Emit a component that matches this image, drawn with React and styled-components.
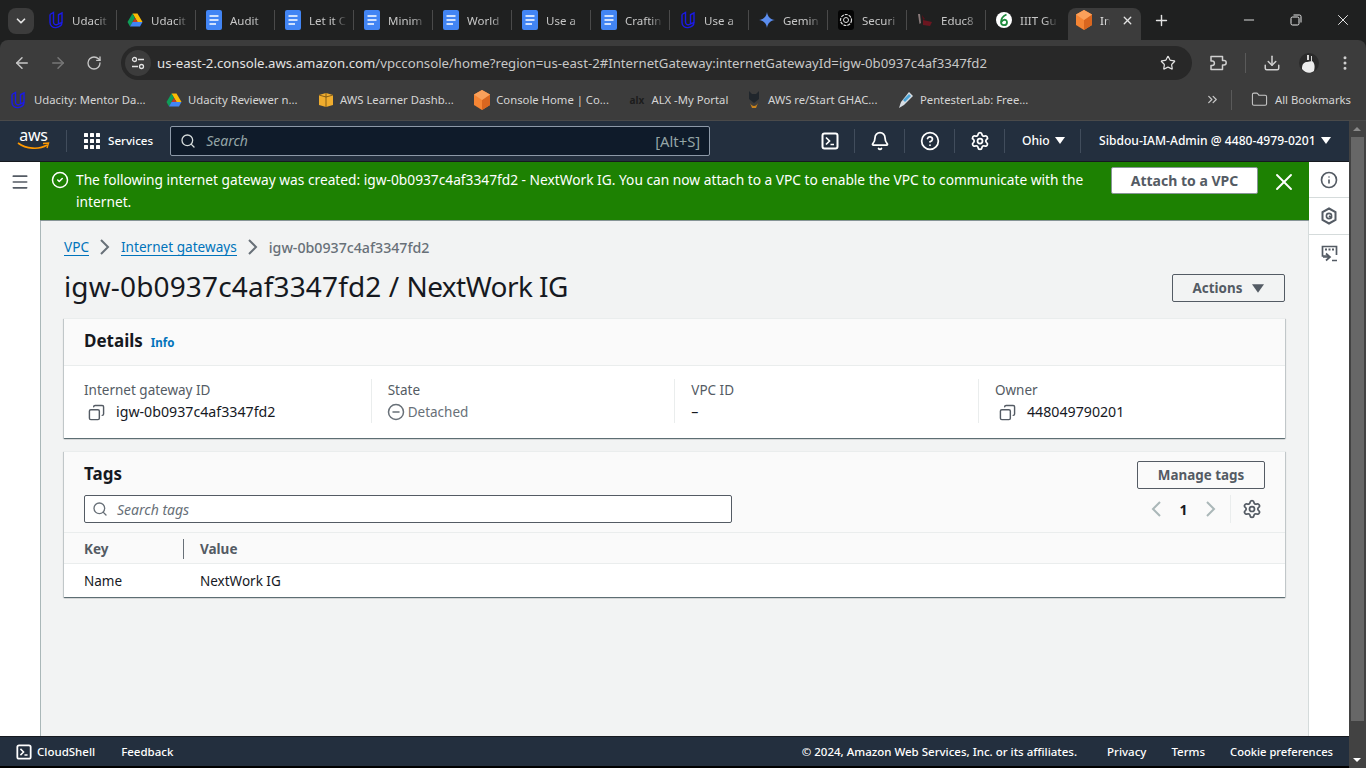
import styled, { createGlobalStyle } from "styled-components";
import {
  ArrowLeft,
  ArrowRight,
  RotateCw,
  Star,
  Download,
  EllipsisVertical,
  ChevronsRight,
  Folder,
  Minus,
  X,
  Plus,
  ChevronDown,
  Bell,
  CircleHelp,
  Settings,
  Search,
  Menu,
  Copy,
  CircleCheck,
  CircleMinus,
  Info,
} from "lucide-react";

const GlobalStyle = createGlobalStyle`
  html, body {
    margin: 0;
    height: 768px;
    overflow: hidden;
    background: #1f2020;
    font-family: "Noto Sans", "Open Sans", sans-serif;
  }
  * { box-sizing: border-box; }
`;

// favicons
const UdacityIcon = ({ size = 16 }) => (
  <svg width={size} height={size + 2} viewBox="0 0 16 18" fill="none" stroke="#1a1ae6" strokeWidth="1.4">
    <path d="M2 3.5 L5.5 1.5 V11 C5.5 13 7 14 9 13.6 L14 11.5 V2 L10.5 3.8 V13 M2 3.5 V11.5 C2 15 5 17 8 16.6 C11 16 14 14 14 11.5" />
  </svg>
);
const DriveIcon = ({ size = 16 }) => (
  <svg width={size} height={size} viewBox="0 0 16 16">
    <path d="M5.5 1.5 H10.5 L15.5 10 H10.5 Z" fill="#fbbc04" />
    <path d="M5.5 1.5 L8 6 L3 14.5 L.5 10 Z" fill="#0f9d58" />
    <path d="M5.5 10 H15.5 L13 14.5 H3 Z" fill="#4285f4" />
    <path d="M5.5 10 H10.5 L8 6 Z" fill="#c53929" />
  </svg>
);
const DocsIcon = () => (
  <svg width="16" height="20" viewBox="0 0 16 20">
    <rect x="0" y="0" width="16" height="20" rx="2" fill="#4285f4" />
    <path d="M3.5 6 H12.5 M3.5 10 H12.5 M3.5 14 H10" stroke="#fff" strokeWidth="1.7" />
  </svg>
);
const CubeIcon = () => (
  <svg width="16" height="20" viewBox="0 0 16 20">
    <path d="M8 0 L16 4.5 V15 L8 20 L0 15 V4.5 Z" fill="#f58534" />
    <path d="M8 10 L16 4.5 V15 L8 20 Z" fill="#d9661f" />
    <path d="M8 0 L16 4.5 L8 10 L0 4.5 Z" fill="#faa05a" />
  </svg>
);
const GeminiIcon = () => (
  <svg width="16" height="16" viewBox="0 0 16 16">
    <path d="M8 0 C8.6 4.6 11.4 7.4 16 8 C11.4 8.6 8.6 11.4 8 16 C7.4 11.4 4.6 8.6 0 8 C4.6 7.4 7.4 4.6 8 0 Z" fill="#5b8def" />
  </svg>
);
const OpenAiIcon = () => (
  <svg width="16" height="20" viewBox="0 0 16 20">
    <rect width="16" height="20" rx="3" fill="#050505" />
    <circle cx="8" cy="10" r="5.5" fill="none" stroke="#ddd" strokeWidth="1.2" strokeDasharray="3 1" />
    <circle cx="8" cy="10" r="2.5" fill="none" stroke="#ddd" strokeWidth="1" />
  </svg>
);
const EducIcon = () => (
  <svg width="16" height="16" viewBox="0 0 16 16">
    <path d="M1 2 L3 2 L4 11 L2.5 12 Z" fill="#8a7a7a" />
    <path d="M6 8 L15 10 L13 14 L6 13 Z" fill="#6b1620" />
    <path d="M5 3 L8 7 L6 8 Z" fill="#571018" />
  </svg>
);
const IiitIcon = () => (
  <svg width="16" height="16" viewBox="0 0 16 16">
    <circle cx="8" cy="8" r="8" fill="#fff" />
    <path d="M10.5 2.5 C7 4 5 7 5 10 C5 12.4 6.6 13.2 8 13.2 C9.8 13.2 11 11.8 11 10.2 C11 8.6 9.6 7.6 8 7.8 C6.8 8 6 9 5.6 10" fill="none" stroke="#1f8a3d" strokeWidth="1.8" />
  </svg>
);
const AwsBoxIcon = () => (
  <svg width="16" height="16" viewBox="0 0 16 16">
    <path d="M1 3 L8 1 L15 3 V13 L8 15 L1 13 Z" fill="#f0ad2e" />
    <path d="M8 1 V15 M1 3 L8 5 L15 3" stroke="#6b4a10" strokeWidth=".8" fill="none" />
  </svg>
);
const AlxIcon = () => <AlxMark>alx</AlxMark>;
const RestartIcon = () => (
  <svg width="16" height="20" viewBox="0 0 16 20">
    <path d="M3 1 L6 4 H10 L13 1 V9 L8 13 L3 9 Z" fill="#20262c" />
    <path d="M4 13 C6 17 10 17 12 13 L10 18 H6 Z" fill="#c9831c" />
  </svg>
);
const PentesterIcon = () => (
  <svg width="16" height="18" viewBox="0 0 16 18">
    <path d="M11 1 L15 5 L6 14 L1 17 L3 11 Z" fill="#d7dde3" />
    <path d="M11 3 L13 5 L7 11 L5 9 Z" fill="#4ca5d8" />
  </svg>
);

// chrome and console glyphs
const ExtensionIcon = () => (
  <svg width="18" height="18" viewBox="0 0 18 18" fill="none" stroke="#d0d0d0" strokeWidth="1.5" strokeLinejoin="round">
    <path d="M2 2.5 H13.5 V6.6 H15 A2.2 2.2 0 0 1 15 11 H13.5 V15.5 H2 V11.4 H3.2 A2.2 2.2 0 0 0 3.2 7 H2 Z" />
  </svg>
);
const ProfilePhoto = () => (
  <svg width="20" height="20" viewBox="0 0 20 20">
    <circle cx="10" cy="10" r="10" fill="#2b2b2b" />
    <path d="M3 16 C3 11 5 9 8 9 L13 8 C16 10 16 14 15 18 C11 21 6 20 3 16 Z" fill="#ececec" />
    <path d="M8 2 H10 V7 H8 Z M12 3 H13 V8 H12 Z" fill="#d8d8d8" />
  </svg>
);
const RestoreIcon = () => (
  <svg width="12" height="12" viewBox="0 0 12 12" fill="none" stroke="#e8e8e8" strokeWidth="1">
    <rect x="1" y="3" width="8" height="8" rx="1.5" />
    <path d="M3.5 1 H9.5 A1.5 1.5 0 0 1 11 2.5 V8.5" />
  </svg>
);
const TerminalIcon = ({ size = 18 }) => (
  <svg width={size} height={size} viewBox="0 0 18 18" fill="none" stroke="#fff" strokeWidth="2">
    <rect x="1.5" y="1.5" width="15" height="15" rx="2" />
    <path d="M5 5.5 L8.5 9 L5 12.5 M9.5 12.5 H13" strokeWidth="1.7" />
  </svg>
);
const GridIcon = () => (
  <svg width="16" height="16" viewBox="0 0 16 16" fill="#fff">
    {[0, 6, 12].flatMap((y) => [0, 6, 12].map((x) => <rect key={`${x}-${y}`} x={x} y={y} width="4" height="4" rx=".5" />))}
  </svg>
);
const Caret = ({ color = "#fff", w = 10, h = 7 }) => (
  <svg width={w} height={h} viewBox="0 0 10 7">
    <path d="M0 0 H10 L5 7 Z" fill={color} />
  </svg>
);
// large thin chevrons of breadcrumbs and pager
const Chevron = ({ left, color }) => (
  <svg width="10" height="16" viewBox="0 0 10 16" fill="none" stroke={color} strokeWidth="2">
    <path d={left ? "M9 1 L2 8 L9 15" : "M1 1 L8 8 L1 15"} />
  </svg>
);
const HexIcon = () => (
  <svg width="16" height="18" viewBox="0 0 16 18" fill="none" stroke="#545b64" strokeWidth="2">
    <path d="M8 1.5 L14.5 5 V13 L8 16.5 L1.5 13 V5 Z" />
    <circle cx="8" cy="9" r="2.6" strokeWidth="1.6" />
    <path d="M8 9 L11 11" strokeWidth="1.6" />
  </svg>
);
const FeedbackIcon = () => (
  <svg width="17" height="17" viewBox="0 0 17 17" fill="none" stroke="#545b64" strokeWidth="1.7">
    <path d="M8 11 H1.5 V1.5 H15.5 V10" />
    <path d="M4 4.5 H6 M7.5 4.5 H9.5 M11 4.5 H13" strokeWidth="1.8" />
    <path d="M5 8.5 L9 12 L5 15.5 M2 12 H8.5 M11 15.5 H16" />
  </svg>
);

// data
const tabs = [
  { icon: <UdacityIcon />, title: "Udacit" },
  { icon: <DriveIcon />, title: "Udacit" },
  { icon: <DocsIcon />, title: "Audit" },
  { icon: <DocsIcon />, title: "Let it C" },
  { icon: <DocsIcon />, title: "Minim" },
  { icon: <DocsIcon />, title: "World" },
  { icon: <DocsIcon />, title: "Use a" },
  { icon: <DocsIcon />, title: "Craftin" },
  { icon: <UdacityIcon />, title: "Use a" },
  { icon: <GeminiIcon />, title: "Gemin" },
  { icon: <OpenAiIcon />, title: "Securi" },
  { icon: <EducIcon />, title: "Educ8" },
  { icon: <IiitIcon />, title: "IIIT Gu" },
];

const bookmarks = [
  { icon: <UdacityIcon />, title: "Udacity: Mentor Da..." },
  { icon: <DriveIcon />, title: "Udacity Reviewer n..." },
  { icon: <AwsBoxIcon />, title: "AWS Learner Dashb..." },
  { icon: <CubeIcon />, title: "Console Home | Co..." },
  { icon: <AlxIcon />, title: "ALX -My Portal" },
  { icon: <RestartIcon />, title: "AWS re/Start GHAC...", tight: true },
  { icon: <PentesterIcon />, title: "PentesterLab: Free..." },
];

const details = [
  { label: "Internet gateway ID", value: "igw-0b0937c4af3347fd2", copy: true },
  { label: "State", value: "Detached", status: true },
  { label: "VPC ID", value: "–" },
  { label: "Owner", value: "448049790201", copy: true },
];

export default function App() {
  return (
    <>
      <GlobalStyle />
      <Page>
        <TabStrip>
          <TabSearch>
            <ChevronDown size={14} strokeWidth={3} color="#e3e3e3" />
          </TabSearch>
          <TabList>
            {tabs.map((tab, i) => (
              <Tab key={i}>
                <FaviconSlot>{tab.icon}</FaviconSlot>
                <TabTitle>{tab.title}</TabTitle>
              </Tab>
            ))}
            <ActiveTab>
              <CubeIcon />
              <ActiveTitle>In</ActiveTitle>
              <X size={13} strokeWidth={2.5} color="#e3e3e3" />
            </ActiveTab>
            <NewTab>
              <Plus size={17} strokeWidth={2} color="#e3e3e3" />
            </NewTab>
          </TabList>
          <WindowButtons>
            <Minus size={16} strokeWidth={1.4} color="#e8e8e8" />
            <RestoreIcon />
            <X size={18} strokeWidth={1.3} color="#e8e8e8" />
          </WindowButtons>
        </TabStrip>

        <Toolbar>
          <ToolbarButton><ArrowLeft size={18} color="#c7c7c7" /></ToolbarButton>
          <ToolbarButton><ArrowRight size={18} color="#777" /></ToolbarButton>
          <ToolbarButton><RotateCw size={16} color="#c7c7c7" /></ToolbarButton>
          <AddressBar>
            <SiteChip>
              <svg width="14" height="14" viewBox="0 0 14 14" fill="none" stroke="#e3e3e3" strokeWidth="1.3">
                <circle cx="3.5" cy="3.5" r="2" />
                <path d="M7 3.5 H13 M1 10.5 H7" />
                <circle cx="10.5" cy="10.5" r="2" />
              </svg>
            </SiteChip>
            <UrlText>
              us-east-2.console.aws.amazon.com<UrlDim>/vpcconsole/home?region=us-east-2#InternetGateway:internetGatewayId=igw-0b0937c4af3347fd2</UrlDim>
            </UrlText>
            <Star size={16} strokeWidth={1.8} color="#e3e3e3" />
          </AddressBar>
          <ToolbarActions>
            <ExtensionIcon />
            <ToolbarDivider />
            <Download size={18} color="#d0d0d0" />
            <ProfilePhoto />
            <EllipsisVertical size={18} color="#d0d0d0" />
          </ToolbarActions>
        </Toolbar>

        <BookmarksBar>
          <BookmarkList>
            {bookmarks.map((b, i) => (
              <Bookmark key={i} $tight={b.tight}>
                {b.icon}
                <span>{b.title}</span>
              </Bookmark>
            ))}
          </BookmarkList>
          <BookmarksRight>
            <OverflowChevrons size={15} color="#c7c7c7" />
            <ToolbarDivider />
            <AllBookmarks>
              <Folder size={17} strokeWidth={1.5} color="#c7c7c7" />
              <span>All Bookmarks</span>
            </AllBookmarks>
          </BookmarksRight>
        </BookmarksBar>

        <ConsoleRow>
          <Console>
            <TopNav>
              <AwsLogo>
                <AwsWord>aws</AwsWord>
                <svg width="33" height="8" viewBox="0 0 33 8" fill="none">
                  <path d="M1 1 C9 7 22 8 30 3" stroke="#ff9900" strokeWidth="1.6" />
                  <path d="M26 1.5 L31.5 1 L30 6" stroke="#ff9900" strokeWidth="1.4" />
                </svg>
              </AwsLogo>
              <NavDivider />
              <ServicesButton>
                <GridIcon />
                <span>Services</span>
              </ServicesButton>
              <GlobalSearch>
                <Search size={16} strokeWidth={2} color="#d5dbdb" />
                <GlobalSearchText>Search</GlobalSearchText>
                <Shortcut>[Alt+S]</Shortcut>
              </GlobalSearch>
              <NavRight>
                <NavIconCell><TerminalIcon /></NavIconCell>
                <NavIconCell><Bell size={20} strokeWidth={2.1} color="#fff" /></NavIconCell>
                <NavIconCell><CircleHelp size={20} strokeWidth={2.1} color="#fff" /></NavIconCell>
                <NavIconCell><Settings size={20} strokeWidth={2.1} color="#fff" /></NavIconCell>
                <NavMenu $width={76} $pad={17}>Ohio <Caret /></NavMenu>
                <NavMenu $width={268} $pad={18} $last>Sibdou-IAM-Admin @ 4480-4979-0201 <Caret /></NavMenu>
              </NavRight>
            </TopNav>

            <Middle>
              <SideRail>
                <Menu size={20} color="#545b64" />
              </SideRail>
              <Content>
                <Flash>
                  <CircleCheck size={18} strokeWidth={2} color="#fff" />
                  <FlashText>
                    The following internet gateway was created: igw-0b0937c4af3347fd2 - NextWork IG. You can now attach to a VPC to enable the VPC to communicate with the internet.
                  </FlashText>
                  <FlashAction>Attach to a VPC</FlashAction>
                  <FlashClose><X size={28} strokeWidth={1.6} color="#fff" /></FlashClose>
                </Flash>

                <Body>
                  <Breadcrumbs>
                    <CrumbLink>VPC</CrumbLink>
                    <Chevron color="#687078" />
                    <CrumbLink>Internet gateways</CrumbLink>
                    <Chevron color="#687078" />
                    <CrumbCurrent>igw-0b0937c4af3347fd2</CrumbCurrent>
                  </Breadcrumbs>

                  <TitleRow>
                    <PageTitle>
                      <TitleId>igw-0b0937c4af3347fd2</TitleId> / <TitleName>NextWork IG</TitleName>
                    </PageTitle>
                    <ActionsButton $width={113}>
                      Actions <Caret color="#545b64" w={12} h={9} />
                    </ActionsButton>
                  </TitleRow>

                  <Card $mb={13}>
                    <DetailsHeader>
                      <CardTitle>Details</CardTitle>
                      <InfoLink>Info</InfoLink>
                    </DetailsHeader>
                    <DetailsGrid>
                      {details.map((d) => (
                        <DetailCell key={d.label}>
                          <DetailLabel>{d.label}</DetailLabel>
                          {d.copy && (
                            <DetailValue $copy>
                              <MirroredCopy size={17} strokeWidth={2} color="#545b64" />
                              {d.value}
                            </DetailValue>
                          )}
                          {d.status && (
                            <StatusValue>
                              <CircleMinus size={18} strokeWidth={2} color="#687078" />
                              {d.value}
                            </StatusValue>
                          )}
                          {!d.copy && !d.status && <DetailValue>{d.value}</DetailValue>}
                        </DetailCell>
                      ))}
                    </DetailsGrid>
                  </Card>

                  <Card>
                    <TagsHeader>
                      <TagsLeft>
                        <CardTitle>Tags</CardTitle>
                        <TagSearch>
                          <Search size={16} strokeWidth={2} color="#687078" />
                          <TagSearchText>Search tags</TagSearchText>
                        </TagSearch>
                      </TagsLeft>
                      <TagsRight>
                        <OutlineButton $width={128}>Manage tags</OutlineButton>
                        <Pager>
                          <Chevron left color="#aab7b8" />
                          <PageNumber>1</PageNumber>
                          <Chevron color="#aab7b8" />
                          <PagerDivider />
                          <Settings size={20} strokeWidth={2.1} color="#545b64" />
                        </Pager>
                      </TagsRight>
                    </TagsHeader>
                    <TagTable>
                      <HeadRow>
                        <KeyHead>Key</KeyHead>
                        <ValueHead>Value</ValueHead>
                      </HeadRow>
                      <DataRow>
                        <KeyCell>Name</KeyCell>
                        <ValueCell>NextWork IG</ValueCell>
                      </DataRow>
                    </TagTable>
                  </Card>
                </Body>
              </Content>
              <HelpRail>
                <HelpCell><Info size={18} strokeWidth={2.2} color="#545b64" /></HelpCell>
                <HelpCell><HexIcon /></HelpCell>
                <HelpCell $plain><FeedbackIcon /></HelpCell>
              </HelpRail>
            </Middle>

            <Footer>
              <FooterLeft>
                <FooterShell><TerminalIcon size={16} /> CloudShell</FooterShell>
                <span>Feedback</span>
              </FooterLeft>
              <FooterRight>
                <Copyright>© 2024, Amazon Web Services, Inc. or its affiliates.</Copyright>
                <span>Privacy</span>
                <span>Terms</span>
                <CookieLink>Cookie preferences</CookieLink>
              </FooterRight>
            </Footer>
            <BottomEdge />
          </Console>
          <Scrollbar>
            <ScrollArrow />
            <ScrollThumb />
            <ScrollArrow $down />
          </Scrollbar>
        </ConsoleRow>
      </Page>
    </>
  );
}

//styles
const Page = styled.div`
  width: 1366px;
  height: 768px;
  display: flex;
  flex-direction: column;
  overflow: hidden;
`;
const TabStrip = styled.div`
  height: 40px;
  flex: none;
  display: flex;
  align-items: flex-start;
  background: #1f2020;
  padding: 8px 0 0 8px;
`;
const TabSearch = styled.div`
  width: 26px;
  height: 26px;
  border-radius: 8px;
  background: #3c3c3c;
  display: flex;
  align-items: center;
  justify-content: center;
`;
const TabList = styled.div`
  display: flex;
  align-items: flex-start;
  height: 32px;
  margin-left: 4px;
`;
const Tab = styled.div`
  width: 79px;
  height: 20px;
  margin-top: 2px;
  flex: none;
  display: flex;
  align-items: center;
  padding-left: 10px;
  gap: 8px;
  border-right: 1px solid #4a4a4a;
  &:nth-child(13) { border-right: none; }
`;
const FaviconSlot = styled.span`
  width: 16px;
  height: 20px;
  display: flex;
  align-items: center;
  justify-content: center;
  flex: none;
`;
const TabTitle = styled.span`
  width: 38px;
  font-size: 11.5px;
  color: #c7c7c7;
  white-space: nowrap;
  overflow: hidden;
  mask-image: linear-gradient(to right, #000 65%, transparent);
`;
const ActiveTab = styled.div`
  width: 73px;
  height: 32px;
  flex: none;
  margin-left: 3px;
  display: flex;
  align-items: center;
  padding: 0 0 8px 8px;
  gap: 8px;
  background: #3c3c3c;
  border-radius: 8px 8px 0 0;
`;
const ActiveTitle = styled.span`
  width: 10px;
  margin-right: 3px;
  font-size: 11.5px;
  color: #e3e3e3;
  white-space: nowrap;
  mask-image: linear-gradient(to right, #000 50%, transparent);
`;
const NewTab = styled.div`
  width: 40px;
  height: 32px;
  flex: none;
  padding-bottom: 8px;
  display: flex;
  align-items: center;
  justify-content: center;
`;
const WindowButtons = styled.div`
  margin-left: auto;
  width: 140px;
  height: 24px;
  flex: none;
  display: grid;
  grid-template-columns: repeat(3, 1fr);
  align-items: center;
  justify-items: center;
`;
const Toolbar = styled.div`
  height: 40px;
  flex: none;
  display: flex;
  align-items: flex-start;
  padding: 6px 8px 0 4px;
  background: #3c3c3c;
  border-radius: 8px 8px 0 0;
`;
const ToolbarButton = styled.div`
  width: 36px;
  height: 34px;
  display: flex;
  align-items: center;
  justify-content: center;
`;
const AddressBar = styled.div`
  width: 1071px;
  height: 34px;
  margin-left: 9px;
  display: flex;
  align-items: center;
  padding: 0 16px 0 4px;
  border-radius: 17px;
  background: #282828;
`;
const SiteChip = styled.div`
  width: 26px;
  height: 26px;
  border-radius: 50%;
  background: #3c3c3c;
  display: flex;
  align-items: center;
  justify-content: center;
  flex: none;
`;
const UrlText = styled.span`
  flex: 1;
  margin-left: 6px;
  font-size: 13.2px;
  color: #e3e3e3;
  white-space: nowrap;
`;
const UrlDim = styled.span`
  color: #c7c7c7;
`;
const ToolbarActions = styled.div`
  flex: 1;
  height: 34px;
  display: flex;
  align-items: center;
  padding-left: 17px;
  gap: 17.5px;
`;
const ToolbarDivider = styled.div`
  width: 1px;
  height: 20px;
  background: #5a5a5a;
`;
const BookmarksBar = styled.div`
  height: 41px;
  flex: none;
  display: flex;
  align-items: center;
  padding: 0 15px 1px 10px;
  background: #3c3c3c;
  border-bottom: 1px solid #4a4a4a;
`;
const BookmarkList = styled.div`
  display: flex;
  align-items: center;
  gap: 20.5px;
`;
const Bookmark = styled.div`
  display: flex;
  align-items: center;
  gap: 6px;
  margin-left: ${(p) => (p.$tight ? -3 : 0)}px;
  font-size: 11.3px;
  color: #d5d5d5;
  white-space: nowrap;
  &:first-child { gap: 8px; }
`;
const AlxMark = styled.span`
  width: 16px;
  font-size: 10px;
  font-weight: 700;
  color: #1c1c1c;
`;
const BookmarksRight = styled.div`
  margin-left: auto;
  display: flex;
  align-items: center;
  gap: 14px;
`;
const OverflowChevrons = styled(ChevronsRight)`
  margin-right: -3px;
`;
const AllBookmarks = styled.div`
  display: flex;
  align-items: center;
  gap: 7px;
  margin-left: 5px;
  font-size: 11.3px;
  color: #d5d5d5;
`;
const ConsoleRow = styled.div`
  flex: 1;
  min-height: 0;
  display: flex;
`;
const Console = styled.div`
  flex: 1;
  min-width: 0;
  display: flex;
  flex-direction: column;
  background: #f2f3f3;
`;
const TopNav = styled.div`
  height: 41px;
  flex: none;
  display: flex;
  align-items: center;
  padding: 0 0 1px 17px;
  background: #232f3e;
  border-bottom: 1px solid #16191f;
  color: #fff;
`;
const AwsLogo = styled.div`
  width: 33px;
  display: flex;
  flex-direction: column;
  align-items: center;
  margin-top: -3px;
`;
const AwsWord = styled.span`
  height: 14px;
  font-size: 16px;
  line-height: 14px;
  letter-spacing: -0.2px;
  color: #fff;
`;
const NavDivider = styled.div`
  width: 1px;
  height: 22px;
  margin-left: 16px;
  background: #414d5c;
`;
const ServicesButton = styled.div`
  margin-left: 17px;
  display: flex;
  align-items: center;
  gap: 8px;
  font-size: 11.6px;
  font-weight: 500;
`;
const GlobalSearch = styled.div`
  width: 540px;
  height: 30px;
  margin-left: 17px;
  display: flex;
  align-items: center;
  padding: 0 9px;
  background: #0f1b2a;
  border: 1px solid #8d99a8;
  border-radius: 2px;
`;
const GlobalSearchText = styled.span`
  margin-left: 10px;
  font-size: 14px;
  font-style: italic;
  color: #95a5a6;
`;
const Shortcut = styled.span`
  margin-left: auto;
  font-size: 14.8px;
  color: #95a5a6;
`;
const NavRight = styled.div`
  margin-left: auto;
  display: flex;
  align-items: center;
  height: 24px;
`;
const NavIconCell = styled.div`
  width: 50px;
  height: 24px;
  display: flex;
  align-items: center;
  justify-content: center;
  border-right: 1px solid #414d5c;
`;
const NavMenu = styled.div`
  width: ${(p) => p.$width}px;
  height: 24px;
  display: flex;
  align-items: center;
  gap: 5px;
  padding-left: ${(p) => p.$pad}px;
  font-size: 12.1px;
  font-weight: 500;
  white-space: nowrap;
  border-right: ${(p) => (p.$last ? "none" : "1px solid #414d5c")};
`;
const Middle = styled.div`
  flex: 1;
  min-height: 0;
  display: flex;
`;
const SideRail = styled.div`
  width: 40px;
  flex: none;
  padding: 10px 0 0 10px;
  background: #fff;
`;
const Content = styled.div`
  flex: 1;
  min-width: 0;
  display: flex;
  flex-direction: column;
`;
const Flash = styled.div`
  height: 59px;
  flex: none;
  display: flex;
  align-items: flex-start;
  padding: 7px 0 0 11px;
  background: #1d8102;
  border-bottom: 1px solid #879596;
  color: #fff;
  svg:first-child { margin-top: 2px; flex: none; }
`;
const FlashText = styled.div`
  width: 1021px;
  margin-left: 7px;
  font-size: 13.74px;
  line-height: 22px;
`;
const FlashAction = styled.div`
  width: 147px;
  height: 27px;
  margin-top: -2px;
  margin-left: 14px;
  flex: none;
  display: flex;
  align-items: center;
  justify-content: center;
  background: #fff;
  border: 1px solid #879596;
  border-radius: 2px;
  font-size: 14px;
  font-weight: 700;
  color: #545b64;
`;
const FlashClose = styled.div`
  height: 28px;
  margin-left: 12px;
  margin-top: -3px;
`;
const Body = styled.div`
  flex: 1;
  padding: 17px 23px 0;
  border-left: 1px solid #aab7b8;
  border-right: 1px solid #d5dbdb;
`;
const Breadcrumbs = styled.div`
  height: 18px;
  display: flex;
  align-items: center;
  gap: 11px;
  font-size: 13.6px;
`;
const CrumbLink = styled.span`
  color: #0073bb;
  border-bottom: 1px solid #0073bb;
  line-height: 17px;
`;
const CrumbCurrent = styled.span`
  font-size: 14.2px;
  color: #687078;
  font-weight: 500;
`;
const TitleRow = styled.div`
  height: 40px;
  margin-top: 10px;
  margin-bottom: 12px;
  display: flex;
  align-items: center;
  justify-content: space-between;
`;
const PageTitle = styled.h1`
  margin: 0;
  font-size: 28px;
  line-height: 40px;
  font-weight: 400;
  color: #16191f;
`;
const TitleId = styled.span`
  letter-spacing: 0.14px;
`;
const TitleName = styled.span`
  letter-spacing: -0.55px;
`;
const OutlineButton = styled.div`
  width: ${(p) => p.$width}px;
  height: 28px;
  display: flex;
  align-items: center;
  justify-content: center;
  gap: 10px;
  background: transparent;
  border: 1px solid #545b64;
  border-radius: 2px;
  font-size: 13.4px;
  font-weight: 700;
  color: #545b64;
`;
const ActionsButton = styled(OutlineButton)`
  margin-top: 4px;
`;
const Card = styled.div`
  width: 1221px;
  margin-bottom: ${(p) => p.$mb || 0}px;
  background: #fff;
  border-top: 1px solid #eaeded;
  box-shadow: 0 1px 1px 0 rgba(0, 28, 36, 0.5), 1px 1px 1px 0 rgba(0, 28, 36, 0.12), -1px 1px 1px 0 rgba(0, 28, 36, 0.12);
`;
const DetailsHeader = styled.div`
  height: 47px;
  display: flex;
  align-items: baseline;
  gap: 8px;
  padding: 9px 20px 0;
  background: #fafafa;
  border-bottom: 1px solid #eaeded;
`;
const CardTitle = styled.h2`
  margin: 0;
  font-size: 17px;
  line-height: 26px;
  font-weight: 700;
  color: #16191f;
`;
const InfoLink = styled.span`
  font-size: 11.5px;
  font-weight: 700;
  color: #0073bb;
`;
const DetailsGrid = styled.div`
  height: 72px;
  display: grid;
  grid-template-columns: repeat(3, 287.6px) 1fr;
  column-gap: 16.07px;
  padding: 13px 20px 0;
`;
const DetailCell = styled.div`
  height: 44px;
  border-right: 1px solid #eaeded;
  &:last-child { border-right: none; }
`;
const DetailLabel = styled.div`
  font-size: 13.5px;
  line-height: 22px;
  color: #545b64;
`;
const DetailValue = styled.div`
  display: flex;
  align-items: center;
  gap: 11px;
  padding-left: ${(p) => (p.$copy ? 4 : 0)}px;
  font-size: 14.2px;
  line-height: 22px;
  color: #16191f;
`;
const MirroredCopy = styled(Copy)`
  transform: scaleX(-1);
`;
const StatusValue = styled.div`
  display: flex;
  align-items: center;
  gap: 3px;
  margin-left: -1px;
  font-size: 13.5px;
  line-height: 22px;
  color: #687078;
`;
const TagsHeader = styled.div`
  height: 81px;
  display: flex;
  justify-content: space-between;
  padding: 9px 20px 0;
  background: #fafafa;
  border-bottom: 1px solid #eaeded;
`;
const TagsLeft = styled.div`
  width: 648px;
`;
const TagSearch = styled.div`
  height: 28px;
  margin-top: 8px;
  display: flex;
  align-items: center;
  padding: 0 7px;
  background: #fff;
  border: 1px solid #545b64;
  border-radius: 2px;
`;
const TagSearchText = styled.span`
  margin-left: 9px;
  font-size: 14px;
  font-style: italic;
  color: #687078;
`;
const TagsRight = styled.div`
  display: flex;
  flex-direction: column;
  align-items: flex-end;
`;
const Pager = styled.div`
  height: 28px;
  margin-top: 6px;
  margin-right: 3px;
  display: flex;
  align-items: center;
`;
const PageNumber = styled.span`
  width: 45px;
  text-align: center;
  font-size: 14px;
  font-weight: 700;
  color: #16191f;
`;
const PagerDivider = styled.div`
  width: 1px;
  height: 28px;
  margin: 0 11px 0 14px;
  background: #eaeded;
`;
const TagTable = styled.div`
  display: flex;
  flex-direction: column;
`;
const HeadRow = styled.div`
  height: 31px;
  padding-top: 1px;
  display: flex;
  align-items: center;
  background: #fafafa;
  border-bottom: 1px solid #eaeded;
`;
const KeyHead = styled.div`
  width: 100px;
  height: 20px;
  margin-left: 20px;
  font-size: 13.5px;
  line-height: 20px;
  font-weight: 700;
  color: #545b64;
  border-right: 1px solid #687078;
`;
const ValueHead = styled.div`
  margin-left: 16px;
  font-size: 13.5px;
  font-weight: 700;
  color: #545b64;
`;
const DataRow = styled.div`
  height: 33px;
  display: flex;
  align-items: center;
  padding-left: 20px;
  background: #fff;
`;
const KeyCell = styled.div`
  width: 116px;
  font-size: 13.5px;
  color: #16191f;
`;
const ValueCell = styled.div`
  font-size: 13.5px;
  color: #16191f;
`;
const HelpRail = styled.div`
  width: 40px;
  flex: none;
  background: #fff;
`;
const HelpCell = styled.div`
  height: 37px;
  display: flex;
  align-items: center;
  justify-content: center;
  border-bottom: ${(p) => (p.$plain ? "none" : "1px solid #d5dbdb")};
  &:first-child { height: 36px; }
`;
const Footer = styled.div`
  height: 30px;
  flex: none;
  display: flex;
  align-items: center;
  justify-content: space-between;
  padding: 0 16px;
  background: #232f3e;
  border-top: 1px solid #16191f;
  color: #fff;
  font-size: 11.5px;
  font-weight: 500;
`;
const FooterLeft = styled.div`
  display: flex;
  align-items: center;
  gap: 26px;
`;
const FooterShell = styled.div`
  display: flex;
  align-items: center;
  gap: 5px;
`;
const FooterRight = styled.div`
  display: flex;
  align-items: center;
  gap: 25px;
`;
const Copyright = styled.span`
  margin-right: 5px;
`;
const CookieLink = styled.span`
  font-size: 11.2px;
`;
const Scrollbar = styled.div`
  width: 17px;
  flex: none;
  display: flex;
  flex-direction: column;
  background: #424242;
`;
const ScrollArrow = styled.div`
  height: 16px;
  flex: none;
  position: relative;
  &::after {
    content: "";
    position: absolute;
    left: 4px;
    top: 6px;
    border: 4px solid transparent;
    ${(p) => (p.$down ? "border-bottom: none; border-top: 4px solid #fff;" : "border-top: none; border-bottom: 4px solid #8a8a8a;")}
  }
`;
const ScrollThumb = styled.div`
  flex: 1;
  margin: 0 2px 31px;
  background: #676767;
`;
const BottomEdge = styled.div`
  height: 2px;
  flex: none;
  background: #000;
`;
